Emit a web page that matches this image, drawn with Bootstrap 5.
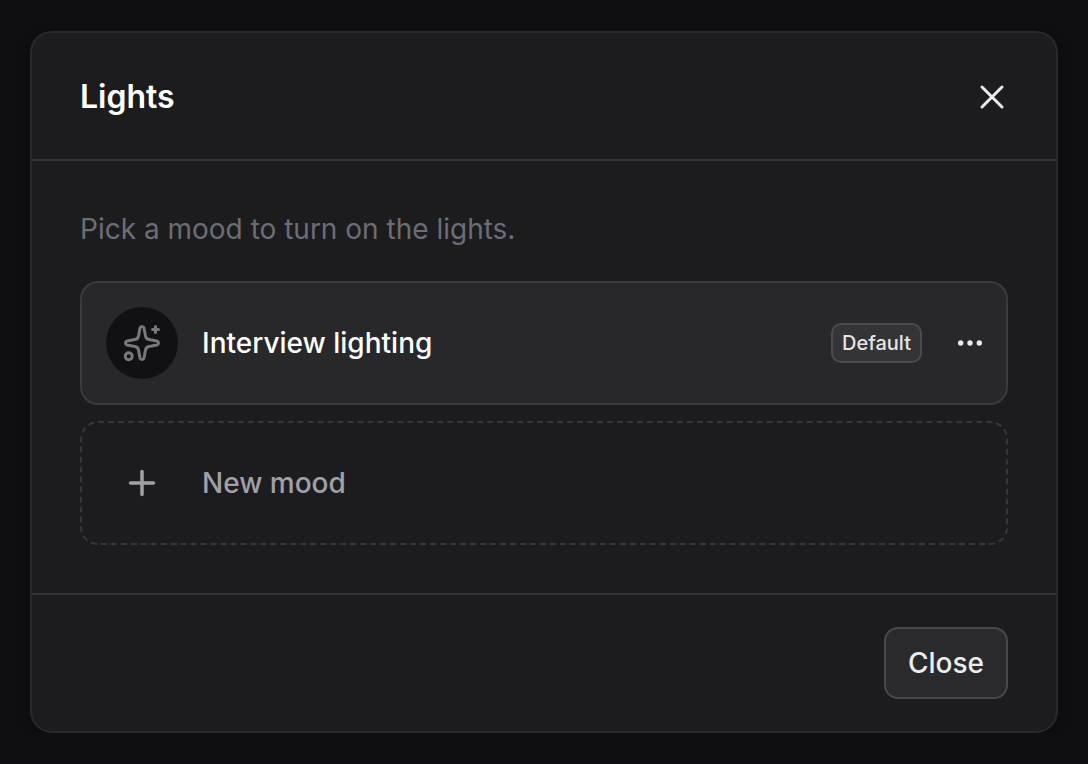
<!DOCTYPE html>
<html lang="en" data-bs-theme="dark">
<head>
<meta charset="utf-8">
<meta name="viewport" content="width=device-width, initial-scale=1">
<title>Lights</title>
<link rel="stylesheet" href="https://cdn.jsdelivr.net/npm/bootstrap@5.3.0/dist/css/bootstrap.min.css">
<style>
body{background:#0f0f11;font-family:Inter,"Liberation Sans",sans-serif;font-size:28px;line-height:40px;padding:31px 30px 0}
.dialog-panel{background:#1c1c1e;border:2px solid #29292b;border-radius:22px;box-shadow:0 4px 16px rgba(0,0,0,.2)}
.dialog-head{padding:40px 48px 38px;border-bottom:2px solid #343437}
.dialog-head h1{font-size:32px;line-height:48px;font-weight:600;color:#fff}
.dialog-main{padding:48px}
.dialog-foot{padding:32px 48px;border-top:2px solid #343437}
.hint{color:#6d6d76;margin-bottom:32px}
.mood{min-height:124px;padding:0 24px;border:2px solid #3b3b3e;border-radius:18px;background:#28282a;color:#fff;font-weight:500}
.mood-new{border:2px dashed #363638;background:transparent;color:#a0a0a8;text-align:left}
.mood-icon{width:72px;height:72px;flex:none}
.mood-icon-dark{background:#111113}
.tag{font-size:20px;line-height:24px;padding:6px 9px;border:2px solid #4b4b4f;border-radius:10px;background:#343437;color:#e4e4e7}
.plain-btn{background:transparent;border:0;padding:0;color:#ececee}
.more-btn{margin-left:36px}
.close-btn{font-size:28px;line-height:40px;font-weight:500;padding:14px 22px;border:2px solid #48484b;border-radius:14px;background:#2a2a2c;color:#ececee}
</style>
<script defer src="https://cdn.jsdelivr.net/npm/bootstrap@5.3.0/dist/js/bootstrap.bundle.min.js"></script>
</head>
<body>
<main class="dialog-panel" role="dialog" aria-labelledby="title">
<header class="dialog-head d-flex align-items-center justify-content-between">
<h1 id="title" class="m-0">Lights</h1>
<button type="button" class="plain-btn d-flex" aria-label="Close dialog"><svg width="32" height="32" viewBox="0 0 32 32" fill="none" stroke="currentColor" stroke-width="3" stroke-linecap="round"><path d="M6 6 26 26M26 6 6 26"/></svg></button>
</header>
<section class="dialog-main">
<p class="hint">Pick a mood to turn on the lights.</p>
<div class="d-grid gap-3">
<div class="mood d-flex align-items-center">
<span class="mood-icon mood-icon-dark rounded-circle d-flex align-items-center justify-content-center"><svg width="40" height="40" viewBox="0 0 40 40" fill="none" stroke="#77777d" stroke-width="3" stroke-linecap="round" stroke-linejoin="round"><path d="M18 5C18.500 3 21.500 3 22 5L23.500 13Q24 16 27 16.500L35 18C37 18.500 37 21.500 35 22L27 23.500Q24 24 23.500 27L22 35C21.500 37 18.500 37 18 35L16.500 27Q16 24 13 23.500L5 22C3 21.500 3 18.500 5 18L13 16.500Q16 16 16.500 13Z"/><path d="M33.500 3.500V9.500M30.500 6.500H36.500"/><circle cx="6.700" cy="33.300" r="3.500"/></svg></span>
<span class="ms-4 flex-grow-1">Interview lighting</span>
<span class="tag">Default</span>
<button type="button" class="plain-btn more-btn d-flex" aria-label="More options"><svg width="24" height="32" viewBox="0 0 24 32" fill="currentColor"><circle cx="2.700" cy="16" r="2.700"/><circle cx="12" cy="16" r="2.700"/><circle cx="21.300" cy="16" r="2.700"/></svg></button>
</div>
<button type="button" class="mood mood-new d-flex align-items-center">
<span class="mood-icon d-flex align-items-center justify-content-center"><svg width="32" height="32" viewBox="0 0 32 32" fill="none" stroke="currentColor" stroke-width="3.500" stroke-linecap="round"><path d="M16 4.500V27.500M4.500 16H27.500"/></svg></span>
<span class="ms-4">New mood</span>
</button>
</div>
</section>
<footer class="dialog-foot d-flex justify-content-end"><button type="button" class="close-btn">Close</button></footer>
</main>
</body>
</html>
